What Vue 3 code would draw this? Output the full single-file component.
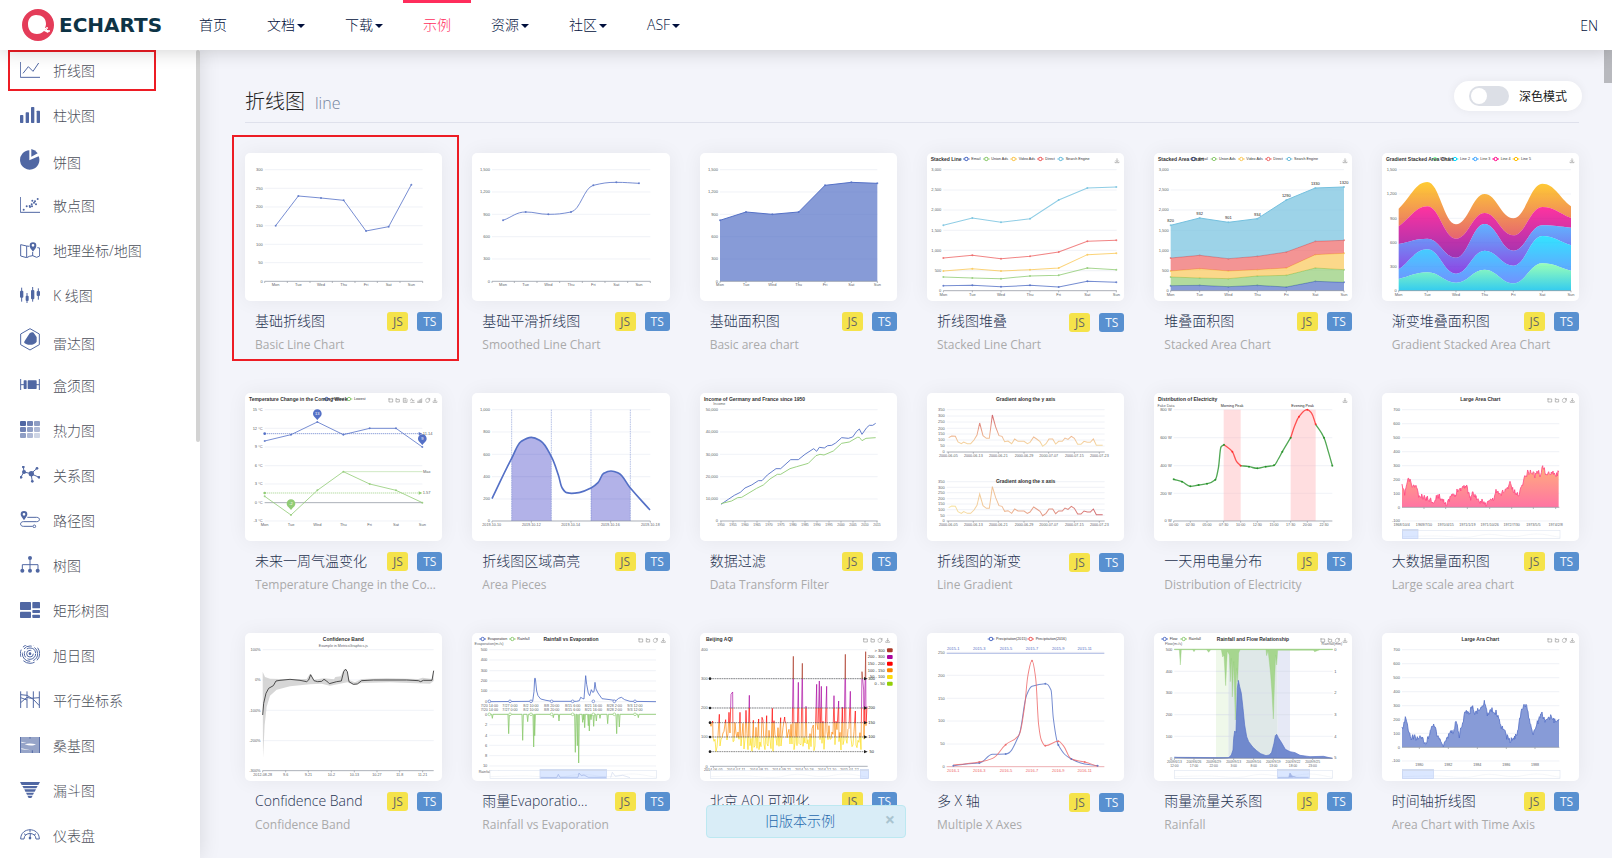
<script setup>
import { ref } from 'vue'

const dark = ref(false)
const noticeOpen = ref(true)

const nav = [
  { name: '首页' },
  { name: '文档', caret: true },
  { name: '下载', caret: true },
  { name: '示例', active: true },
  { name: '资源', caret: true },
  { name: '社区', caret: true },
  { name: 'ASF', caret: true }
]

/* ---------- SVG helpers ---------- */
const C = { blue: '#5470c6', green: '#91cc75', yellow: '#fac858', red: '#ee6666', cyan: '#73c0de' }
const el = (tag, attrs, text) => ({ tag, attrs, text })
const path = (d, attrs = {}) => el('path', { d, fill: 'none', ...attrs })
const rect = (x, y, width, height, attrs = {}) => el('rect', { x, y, width, height, ...attrs })
const text = (x, y, t, attrs = {}) =>
  el('text', { x, y, 'font-size': 12, fill: '#5c5f68', 'text-anchor': 'middle', ...attrs }, t)
const title = (x, y, t, anchor = 'start') =>
  text(x, y, t, { 'font-size': 15, 'font-weight': 700, fill: '#333', 'text-anchor': anchor })
const zip = (xs, ys) => xs.map((x, i) => [x, ys[i]])
const poly = pts => 'M' + pts.map(p => p.join(' ')).join('L')
const pairs = s => s.split(' ').map(p => p.split(',').map(Number))

function smooth(pts, start = 'M') {
  const n = pts.length
  const slope = pts.map((p, i) => {
    if (i === 0 || i === n - 1) {
      const a = pts[i ? n - 2 : 0]
      const b = pts[i ? n - 1 : 1]
      return (b[1] - a[1]) / (b[0] - a[0])
    }
    const l = (p[1] - pts[i - 1][1]) / (p[0] - pts[i - 1][0])
    const r = (pts[i + 1][1] - p[1]) / (pts[i + 1][0] - p[0])
    return l * r <= 0 ? 0 : (2 * l * r) / (l + r)
  })
  let d = start + pts[0].join(' ')
  for (let i = 1; i < n; i++) {
    const dx = (pts[i][0] - pts[i - 1][0]) / 2.4
    d += `C${pts[i - 1][0] + dx} ${pts[i - 1][1] + slope[i - 1] * dx} ${pts[i][0] - dx} ${pts[i][1] - slope[i] * dx} ${pts[i].join(' ')}`
  }
  return d
}
const dots = (pts, color) =>
  pts.map(([cx, cy]) => el('circle', { cx, cy, r: 3, fill: color, 'fill-opacity': 0.8 }))
const line = (pts, color, w = 3) => [path(poly(pts), { stroke: color, 'stroke-width': w, 'stroke-opacity': 0.8 }), ...dots(pts, color)]
const grid = (x1, x2, ys, labels, gap = 6) =>
  ys.flatMap((y, i) => [
    path(`M${x1} ${y}H${x2}`, { stroke: '#e9ebf3', 'stroke-width': 2 }),
    text(x1 - gap, y + 4, labels[i], { 'text-anchor': 'end' })
  ])
const axis = (x1, x2, y, ticks = []) => [
  path(`M${x1} ${y}H${x2}` + ticks.map(t => `M${t} ${y}v5`).join(''), { stroke: '#8e929c', 'stroke-width': 2 })
]
const xlabels = (xs, y, names, attrs) => names.map((n, i) => text(xs[i], y, n, attrs))
const days = ['Mon', 'Tue', 'Wed', 'Thu', 'Fri', 'Sat', 'Sun']
const legend = (items, y) =>
  items.flatMap(([x, name, color]) => [
    path(`M${x - 10} ${y}h20`, { stroke: color, 'stroke-width': 3 }),
    el('circle', { cx: x, cy: y, r: 5, fill: '#fff', stroke: color, 'stroke-width': 3 }),
    text(x + 15, y + 3, name, { 'text-anchor': 'start', fill: '#333', 'font-size': 11 })
  ])
const toolShapes = {
  zoom: 'M-5 -6V5H6V-4H-3M-7 -4H-2',
  undo: 'M-5 -6V5H5V-3H-3M-5 -6L-1 -3',
  file: 'M-5 -6H3L6 -3V6H-5ZM-2 -1H3M-2 2H3',
  wave: 'M-6 6H7M-6 1L-2 -5L1 2L6 0',
  bars: 'M-5 6V1M-1 6V-2M3 6V-4M6 6V-6M-7 6H7',
  ring: 'M-6 1C-6 -7 4 -8 6 -3M6 -1C6 7 -4 8 -6 3M6 -7V-2H2',
  save: 'M0 -7V3M-4 -1L0 3L4 -1M-6 3V6H6V3'
}
const tools = (y, items) =>
  items.map(([x, kind]) =>
    path(toolShapes[kind], { transform: `translate(${x} ${y})`, stroke: '#999', 'stroke-width': 2 })
  )
const slider = (x, y, w, from, to) => [
  rect(x, y + 3, w, 25, { fill: '#fff', stroke: '#e0e6f1', 'stroke-width': 2 }),
  path(smooth([[x, y + 22], [x + w * 0.2, y + 20], [x + w * 0.4, y + 24], [x + w * 0.55, y + 15], [x + w * 0.7, y + 22], [x + w * 0.85, y + 14], [x + w, y + 24]]), { stroke: '#e0e6f1', 'stroke-width': 1 }),
  rect(from, y, to - from, 28, { fill: '#87afff', 'fill-opacity': 0.3, stroke: '#c8d5f3', 'stroke-width': 2 }),
  rect(from, y, to - from, 5, { fill: '#d2dbee' })
]
const pin = (x, y, color, t) => [
  path(`M${x} ${y - 5}C${x - 3} ${y - 13} ${x - 13} ${y - 16} ${x - 13} ${y - 25}A13 13 0 1 1 ${x + 13} ${y - 25}C${x + 13} ${y - 16} ${x + 3} ${y - 13} ${x} ${y - 5}Z`, { fill: color }),
  text(x, y - 20, t, { fill: '#fff' })
]
function random(seed) {
  let s = seed
  return () => ((s = (s * 16807) % 2147483647) / 2147483647)
}
function jagged(pts, amp, seed, floor) {
  const r = random(seed)
  const out = []
  for (let i = 1; i < pts.length; i++) {
    const [a, b] = [pts[i - 1], pts[i]]
    for (let x = a[0]; x < b[0]; x += 2) {
      const y = a[1] + ((b[1] - a[1]) * (x - a[0])) / (b[0] - a[0]) + (r() - 0.5) * amp
      out.push([x, Math.min(floor, Math.round(y))])
    }
  }
  return out
}
const gradient = (id, stops, attrs = {}) => ({ id, stops, attrs: { x1: 0, y1: 0, x2: 0, y2: 1, ...attrs } })

/* ---------- chart thumbnails ---------- */
const area = (pts, base) => poly(pts) + `L${pts[pts.length - 1][0]} ${base}L${pts[0][0]} ${base}Z`
const thousands = ['1,500', '1,200', '900', '600', '300', '0']
const ys6 = [119, 186, 253, 320, 387, 454]
const ys7 = [119, 180, 240, 301, 361, 422, 482]
const lower6 = [74, 141, 208, 275, 342, 408]
const stackLabels = ['3,000', '2,500', '2,000', '1,500', '1,000', '500', '0']

function basicLine() {
  const xs = [137, 205, 273, 341, 408, 476, 544]
  return [
    ...grid(104, 578, [119, 175, 231, 287, 343, 398, 454], ['300', '250', '200', '150', '100', '50', '0']),
    ...axis(104, 578, 454, [104, 172, 240, 307, 375, 442, 510, 578]),
    ...xlabels(xs, 468, days),
    ...line(zip(xs, [287, 198, 204, 211, 303, 290, 164]), C.blue)
  ]
}
function smoothLine() {
  const xs = [819, 887, 955, 1023, 1090, 1159, 1227]
  const pts = zip(xs, [271, 246, 253, 246, 166, 157, 160])
  return [
    ...grid(786, 1261, ys6, thousands),
    ...axis(786, 1261, 454, [786, 853, 921, 989, 1057, 1125, 1193, 1261]),
    ...xlabels(xs, 468, days),
    path(smooth(pts), { stroke: C.blue, 'stroke-width': 3, 'stroke-opacity': 0.8 }),
    ...dots(pts, C.blue)
  ]
}
function basicArea() {
  const xs = [90, 168, 247, 326, 405, 484, 562]
  const pts = zip(xs, [271, 246, 253, 246, 166, 157, 160])
  return [
    ...grid(90, 562, ys6, thousands),
    path(area(pts, 454), { fill: C.blue, 'fill-opacity': 0.7 }),
    path(poly(pts), { stroke: C.blue, 'stroke-width': 3 }),
    ...dots(pts, C.blue),
    ...axis(90, 562, 454, xs),
    ...xlabels(xs, 468, days)
  ]
}
const stackRows = [
  [467, 466, 470, 466, 471, 454, 457],
  [441, 444, 446, 438, 436, 414, 419],
  [423, 416, 423, 419, 414, 374, 370],
  [384, 376, 386, 379, 366, 334, 331],
  [286, 264, 277, 266, 210, 174, 171]
]
const stackColors = [C.blue, C.green, C.yellow, C.red, C.cyan]
function stackedLine() {
  const xs = [760, 847, 933, 1020, 1106, 1192, 1279]
  return [
    ...legend([[829, 'Email', C.blue], [889, 'Union Ads', C.green], [971, 'Video Ads', C.yellow], [1051, 'Direct', C.red], [1112, 'Search Engine', C.cyan]], 87),
    title(722, 93, 'Stacked Line'),
    ...tools(92, [[1281, 'save']]),
    ...grid(760, 1280, ys7, stackLabels),
    ...axis(760, 1280, 482, xs),
    ...xlabels(xs, 497, days),
    ...stackRows.flatMap((r, i) => line(zip(xs, r), stackColors[i]))
  ]
}
function stackedArea() {
  const xs = [92, 179, 265, 352, 439, 526, 612]
  const tops = [820, 932, 901, 934, 1290, 1330, 1320]
  return [
    ...legend([[161, 'Email', C.blue], [222, 'Union Ads', C.green], [304, 'Video Ads', C.yellow], [385, 'Direct', C.red], [447, 'Search Engine', C.cyan]], 87),
    title(54, 93, 'Stacked Area Chart'),
    ...tools(92, [[615, 'save']]),
    ...grid(92, 612, ys7, stackLabels),
    ...stackRows.flatMap((r, i) => {
      const base = i ? stackRows[i - 1] : xs.map(() => 482)
      return [
        path(poly(zip(xs, r)) + poly(zip(xs, base).reverse()).replace('M', 'L') + 'Z', { fill: stackColors[i], 'fill-opacity': 0.7 }),
        path(poly(zip(xs, r)), { stroke: stackColors[i], 'stroke-width': 3 }),
        ...dots(zip(xs, r), stackColors[i])
      ]
    }),
    ...axis(92, 612, 482, xs),
    ...xlabels(xs, 497, days),
    ...tops.map((t, i) => text(xs[i], stackRows[4][i] - 9, t, { fill: '#222' }))
  ]
}
function gradientArea() {
  const xs = [776, 862, 948, 1034, 1120, 1207, 1293]
  const rows = [
    [236, 156, 283, 192, 265, 161, 229],
    [289, 229, 326, 249, 316, 231, 264],
    [342, 326, 383, 282, 362, 286, 293],
    [418, 358, 431, 362, 407, 318, 346],
    [447, 427, 458, 419, 460, 400, 422],
    [482, 482, 482, 482, 482, 482, 482]
  ]
  return [
    ...legend([[885, 'Line 1', '#80ffa5'], [945, 'Line 2', '#00ddff'], [1006, 'Line 3', '#37a2ff'], [1067, 'Line 4', '#ff0087'], [1128, 'Line 5', '#ffbf00']], 87),
    title(738, 93, 'Gradient Stacked Area Chart'),
    ...tools(92, [[1296, 'save']]),
    ...grid(776, 1293, [119, 192, 265, 338, 410, 482], thousands),
    ...rows.slice(0, 5).map((r, i) =>
      path(smooth(zip(xs, r)) + smooth(zip(xs, rows[i + 1]).reverse(), 'L') + 'Z', { fill: `url(#stack-${i})`, 'fill-opacity': 0.8 })
    ),
    ...axis(776, 1293, 482, xs),
    ...xlabels(xs, 497, days)
  ]
}
function temperature() {
  const xs = [104, 183, 262, 340, 419, 498, 577]
  const dash = { 'stroke-width': 2, 'stroke-dasharray': '4 2' }
  return [
    ...legend([[290, 'Highest', C.blue], [357, 'Lowest', C.green]], 42),
    title(57, 48, 'Temperature Change in the Coming Week'),
    ...tools(46, [[482, 'zoom'], [503, 'undo'], [525, 'file'], [547, 'wave'], [569, 'bars'], [593, 'ring'], [615, 'save']]),
    ...grid(104, 577, [74, 130, 186, 242, 297, 353, 408], ['15 °C', '12 °C', '9 °C', '6 °C', '3 °C', '0 °C', '-3 °C']),
    ...axis(104, 577, 353),
    ...xlabels(xs, 424, days),
    path('M104 146H570', { stroke: C.blue, ...dash }),
    path('M104 324H570', { stroke: C.green, ...dash }),
    path('M340 260H577', { stroke: C.green, ...dash }),
    path('M566 141L577 146L566 151Z', { fill: C.blue }),
    path('M566 319L577 324L566 329Z', { fill: C.green }),
    el('circle', { cx: 104, cy: 146, r: 4, fill: C.blue }),
    el('circle', { cx: 104, cy: 324, r: 4, fill: C.green }),
    ...line(zip(xs, [168, 149, 111, 149, 130, 130, 186]), C.blue),
    ...line(zip(xs, [334, 390, 316, 260, 297, 316, 353]), C.green),
    ...pin(262, 111, C.blue, '13'),
    ...pin(577, 186, C.blue, '9'),
    ...pin(183, 381, C.green, '-2'),
    text(593, 150, '11.14'), text(590, 264, 'Max'), text(590, 328, '1.57')
  ]
}
function areaPieces() {
  const pts = pairs('786,341 845,220 873,170 904,157 932,168 964,215 985,270 996,308 1010,323 1025,325 1050,322 1083,309 1104,293 1121,265 1143,258 1165,264 1201,309 1260,375')
  const dash = x => path(`M${x} 74V408`, { stroke: C.blue, 'stroke-opacity': 0.6, 'stroke-width': 2, 'stroke-dasharray': '5 2' })
  const piece = (a, b) => {
    const p = pts.slice(a, b)
    return path(smooth(p) + `V408H${p[0][0]}Z`, { fill: '#0000b4', 'fill-opacity': 0.3 })
  }
  return [
    ...grid(786, 1261, lower6, ['1,000', '800', '600', '400', '200', '0']),
    piece(1, 6), piece(11, 17),
    ...[845, 964, 1083, 1201].map(dash),
    path(smooth(pts), { stroke: C.blue, 'stroke-width': 5 }),
    ...axis(786, 1261, 408, [786, 904, 1023, 1142, 1261]),
    ...xlabels([785, 904, 1022, 1141, 1261], 423, ['2019-10-10', '2019-10-12', '2019-10-14', '2019-10-16', '2019-10-18'], { 'font-size': 11 })
  ]
}
function income() {
  const xs = Array.from({ length: 14 }, (_, i) => 93 + i * 36)
  return [
    title(42, 48, 'Income of Germany and France since 1950'),
    text(88, 60, 'Income', { 'font-size': 11 }),
    ...grid(90, 563, lower6, ['50,000', '40,000', '30,000', '20,000', '10,000', '0']),
    ...axis(90, 563, 408, xs),
    ...xlabels(xs, 423, xs.map((_, i) => 1950 + i * 5), { 'font-size': 10 }),
    path(poly(pairs('93,358 115,343 133,331 151,322 165,309 185,300 205,287 216,287 232,270 258,251 272,251 302,224 325,224 345,208 371,191 380,199 388,187 403,189 413,182 425,181 437,174 455,158 475,160 488,156 500,139 508,132 516,148 530,128 538,121 548,121 557,115')), { stroke: C.blue, 'stroke-width': 3, 'stroke-opacity': 0.9 }),
    path(poly(pairs('93,356 125,348 143,338 155,337 180,322 200,310 220,300 240,282 262,268 272,268 300,251 320,245 355,235 378,212 390,208 402,210 430,198 455,175 478,171 502,157 508,157 516,167 528,160 557,158')), { stroke: C.green, 'stroke-width': 3, 'stroke-opacity': 0.9 })
  ]
}
function lineGradient() {
  const pts = pairs('776,158 785,153 796,154 804,171 814,176 821,171 832,176 842,176 852,165 861,150 869,114 879,152 889,160 898,160 907,90 917,126 927,152 936,154 944,170 954,168 965,176 974,162 984,169 1002,169 1012,176 1020,172 1031,156 1040,162 1050,170 1058,184 1068,176 1077,162 1088,162 1097,177 1106,169 1117,169 1125,159 1134,163 1144,154 1153,160 1163,178 1173,178 1182,169 1192,172 1201,172 1210,162 1219,181 1238,181')
  const labels = ['350', '300', '250', '200', '150', '100', '50', '0']
  const dates = ['2000-06-05', '2000-06-13', '2000-06-21', '2000-06-29', '2000-07-07', '2000-07-15', '2000-07-23']
  const xs = [775, 850, 925, 1002, 1076, 1153, 1228]
  return [
    title(1007, 48, 'Gradient along the y axis', 'middle'),
    ...grid(770, 1244, [74, 93, 111, 130, 147, 165, 183, 201], labels),
    ...axis(770, 1244, 201, xs),
    ...xlabels(xs, 216, dates, { 'font-size': 11 }),
    path(poly(pts), { stroke: 'url(#heat-y)', 'stroke-width': 3, 'stroke-opacity': 0.8 }),
    ...grid(770, 1244, [290, 307, 323, 341, 357, 374, 391, 408], labels),
    title(1007, 293, 'Gradient along the x axis', 'middle'),
    ...axis(770, 1244, 408, xs),
    ...xlabels(xs, 423, dates, { 'font-size': 11 }),
    path(poly(pts.map(([x, y]) => [x, Math.round(408 - (201 - y) * 0.93)])), { stroke: 'url(#heat-x)', 'stroke-width': 3, 'stroke-opacity': 0.8 })
  ]
}
function electricity() {
  const seg = (s, stroke) => path(smooth(pairs(s)), { stroke, 'stroke-width': 4, 'stroke-opacity': 0.75 })
  const xs = [101, 151, 201, 251, 302, 352, 402, 452, 502, 552]
  return [
    title(54, 48, 'Distribution of Electricity'),
    ...tools(46, [[615, 'save']]),
    ...grid(101, 577, [74, 158, 242, 325, 408], ['800 W', '600 W', '400 W', '200 W', '0 W']),
    text(78, 66, 'Fake Data', { 'font-size': 11 }),
    rect(251, 74, 51, 334, { fill: '#ffadb1', 'fill-opacity': 0.4 }),
    rect(452, 74, 75, 334, { fill: '#ffadb1', 'fill-opacity': 0.4 }),
    text(276, 67, 'Morning Peak', { fill: '#222', 'font-size': 11 }),
    text(488, 67, 'Evening Peak', { fill: '#222', 'font-size': 11 }),
    seg('101,283 126,290 151,304 176,300 201,296 226,284 235,250 243,186 252,179', '#188b1c'),
    seg('302,242 327,245 352,250 377,245 402,241 415,222 427,200 452,158', '#188b1c'),
    seg('527,118 552,158 565,200 577,242', '#188b1c'),
    seg('252,179 277,200 290,230 302,242', '#f22'),
    seg('452,158 465,120 477,95 502,74 515,85 527,118', '#f22'),
    ...dots(pairs('101,283 126,290 151,304 176,300 201,296 226,284 252,179 327,245 352,250 377,245 402,241 427,200 452,158 552,158 577,242'), '#188b1c'),
    ...dots(pairs('277,200 302,242 477,95 502,74 527,118'), '#f22'),
    ...axis(101, 577, 408, xs),
    ...xlabels(xs, 423, ['00:00', '02:30', '05:00', '07:30', '10:00', '12:30', '15:00', '17:30', '20:00', '22:30'], { 'font-size': 11 })
  ]
}
const wideLabels = ['700', '600', '500', '400', '300', '200', '100', '0', '-100']
const wideYs = [74, 116, 158, 200, 242, 284, 325, 367, 408]
function largeArea(name, key, stroke, fill, amp, seed, xs, labels, to) {
  const pts = jagged(pairs(key), amp, seed, 366)
  return [
    title(1021, 48, name, 'middle'),
    ...tools(46, [[1229, 'zoom'], [1251, 'undo'], [1273, 'ring'], [1297, 'save']]),
    ...grid(786, 1258, wideYs, wideLabels),
    path(area(pts, 367), { fill }),
    path(poly(pts), { stroke, 'stroke-width': 3, 'stroke-opacity': 0.8 }),
    ...axis(786, 1258, 367, xs.filter(x => x > 790)),
    ...xlabels(xs, 423, labels, { 'font-size': 11 }),
    ...slider(787, 433, 473, 787, to)
  ]
}
function confidence() {
  const xs = [98, 167, 235, 304, 373, 441, 509, 578]
  return [
    title(340, 48, 'Confidence Band', 'middle'),
    text(340, 67, 'Example in MetricsGraphics.js', { 'font-size': 11 }),
    ...grid(98, 611, [74, 165, 256, 347, 437], ['100%', '0%', '-100%', '-200%', '-300%']),
    path('M98 140L105 156L120 161L180 163L230 162L240 146L252 164L282 160L312 163L316 156L332 154L342 132L349 132L358 166L375 172L395 162L470 160L565 162L578 158L606 162L611 137V168L600 176L480 172L395 174L372 180L352 172L330 176L300 182L275 176L240 178L180 184L140 194L120 212L110 245L104 300L99 400Z', { fill: '#ccc', 'fill-opacity': 0.8 }),
    path(poly(pairs('98,270 101,235 108,205 116,190 130,182 138,168 150,166 180,163 210,166 230,170 236,165 242,149 252,167 263,170 275,169 282,163 290,168 298,176 320,170 334,168 341,140 347,133 352,140 357,170 370,178 382,177 395,167 430,165 530,165 565,167 572,170 580,166 606,166 611,137')), { stroke: '#333', 'stroke-width': 3, 'stroke-opacity': 0.85 }),
    ...axis(98, 611, 437, xs),
    ...xlabels(xs, 453, ['2012-08-28', '9-6', '9-21', '10-2', '10-13', '10-27', '11-8', '11-21'], { 'font-size': 11 })
  ]
}
function evaporation() {
  const xs = [778, 840, 903, 965, 1028, 1090, 1153, 1215]
  const dates = ['7/20 14:00', '7/27 0:00', '8/2 10:00', '8/8 20:00', '8/15 6:00', '8/21 16:00', '8/28 2:00', '9/3 12:00']
  const drops = [[787, 280], [836, 326], [878, 346], [893, 290], [911, 366], [914, 332], [970, 278], [987, 288], [1036, 382], [1042, 362], [1046, 414], [1058, 292], [1061, 284], [1064, 308], [1075, 302], [1078, 318], [1083, 284], [1091, 304], [1099, 288], [1110, 280], [1133, 296], [1160, 326], [1168, 306], [1225, 278]]
  const rings = (y, color) => xs.map(cx => el('circle', { cx, cy: y, r: 4, fill: '#fff', stroke: color, 'stroke-width': 2 }))
  return [
    ...legend([[758, 'Evaporation', C.blue], [847, 'Rainfall', C.green]], 42),
    title(1023, 48, 'Rainfall vs Evaporation', 'middle'),
    ...tools(46, [[1232, 'zoom'], [1254, 'undo'], [1276, 'ring'], [1300, 'save']]),
    text(777, 59, 'Evaporation(m³/s)', { 'font-size': 11 }),
    ...grid(778, 1278, [74, 105, 137, 168, 198, 230], ['500', '400', '300', '200', '100', '0']),
    ...grid(778, 1278, [268, 299, 331, 361, 392, 423], ['0', '2', '4', '6', '8', '10']),
    ...xlabels(xs, 245, dates, { 'font-size': 11 }), ...xlabels(xs, 258, dates, { 'font-size': 11 }),
    path(poly(pairs('778,230 908,229 912,200 914,160 916,160 920,198 924,212 932,222 948,226 965,229 1040,229 1048,227 1052,217 1057,220 1062,222 1067,152 1070,178 1075,205 1079,212 1084,194 1088,202 1092,200 1095,172 1098,192 1104,204 1116,221 1140,224 1158,227 1166,220 1174,217 1184,224 1200,229 1278,230')), { stroke: C.blue, 'stroke-width': 3, 'stroke-opacity': 0.85 }),
    path('M778 268' + drops.map(([x, y]) => `H${x - 2}L${x} ${y}L${x + 2} 268`).join('') + 'H1278', { stroke: C.green, 'stroke-width': 3, 'stroke-opacity': 0.9 }),
    ...rings(229, C.blue), ...rings(268, C.green),
    text(777, 444, 'Rainfall(mm)', { 'font-size': 11 }),
    ...slider(780, 433, 500, 930, 1130),
    path('M932 458H980L985 448L990 457H1044L1047 444L1054 452L1062 450L1075 457H1128', { stroke: '#9fb2e4', 'stroke-width': 2 }),
    path('M1142 458L1147 442L1156 454L1178 451L1200 458', { stroke: '#d2dbee', 'stroke-width': 2 })
  ]
}
function beijing() {
  const r = random(77)
  const peaks = [[68, 288], [88, 268], [107, 284], [117, 262], [123, 208], [128, 201], [150, 262], [168, 256], [178, 211], [190, 286], [206, 282], [216, 277], [230, 272], [247, 250], [272, 278], [284, 276], [310, 94], [325, 172], [337, 115], [348, 244], [370, 300], [380, 178], [388, 168], [394, 184], [410, 184], [432, 212], [446, 228], [457, 246], [466, 88], [481, 199], [496, 258], [516, 140], [521, 195], [527, 80], [531, 244]]
  const pts = []
  for (let x = 60; x <= 532; x += 3) {
    const peak = peaks.find(p => p[0] >= x && p[0] < x + 3)
    pts.push(peak || [x, Math.round(r() > 0.4 ? 338 + r() * 42 : 285 + r() * 60)])
  }
  const xs = [70, 138, 207, 275, 343, 411, 478]
  const bands = [['> 300', '#ac3b2a'], ['200 - 300', '#aa069f'], ['150 - 200', '#fd0100'], ['100 - 150', '#fb8200'], ['50 - 100', '#fbdb0f'], ['0 - 50', '#93ce07']]
  return [
    title(48, 48, 'Beijing AQI'),
    ...tools(46, [[526, 'zoom'], [548, 'undo'], [570, 'ring'], [593, 'save']]),
    ...grid(60, 533, [74, 161, 249, 336, 424], ['400', '300', '200', '100', '0'], 7),
    path(poly(pts), { stroke: 'url(#aqi)', 'stroke-width': 2 }),
    ...[[161, '300'], [249, '200'], [293, '150'], [336, '100'], [380, '50']].flatMap(([y, t]) => [
      path(`M60 ${y}H526`, { stroke: '#555', 'stroke-width': 2, 'stroke-dasharray': '5 2' }),
      el('circle', { cx: 60, cy: y, r: 4, fill: '#222' }),
      path(`M522 ${y - 5}L533 ${y}L522 ${y + 5}Z`, { fill: '#222' }),
      text(545, y + 4, t, { fill: '#222' })
    ]),
    ...bands.flatMap(([t, fill], i) => [
      rect(591, 70 + i * 20, 17, 12, { rx: 3, fill }),
      text(584, 80 + i * 20, t, { 'text-anchor': 'end', fill: '#333' })
    ]),
    ...axis(60, 533, 424, xs),
    ...xlabels(xs, 437, ['2014-06-05', '2014-07-11', '2014-08-15', '2014-09-21', '2014-10-26', '2014-12-10', '2015-01-22'], { 'font-size': 11 }),
    ...slider(62, 433, 474, 511, 536)
  ]
}
function multipleX() {
  const xs = [790, 868, 948, 1026, 1105, 1184]
  const a = pairs('790,422 829,417 868,414 908,388 947,387 987,330 1010,210 1026,184 1066,176 1083,195 1090,280 1105,360 1144,402 1184,417 1223,422')
  const b = pairs('790,420 829,416 868,411 908,400 947,359 987,330 1003,250 1014,150 1026,107 1037,160 1046,300 1054,345 1066,362 1105,349 1120,362 1144,402 1184,411 1223,424')
  return [
    ...legend([[903, 'Precipitation(2015)', C.blue], [1022, 'Precipitation(2016)', C.red]], 42),
    ...grid(770, 1243, [82, 151, 220, 288, 357, 425], ['250', '200', '150', '100', '50', '0']),
    path('M770 85H1243', { stroke: C.blue, 'stroke-width': 2, 'stroke-opacity': 0.7 }),
    path('M770 425H1243', { stroke: C.red, 'stroke-width': 2, 'stroke-opacity': 0.7 }),
    ...xlabels(xs, 75, ['2015-1', '2015-3', '2015-5', '2015-7', '2015-9', '2015-11'], { fill: C.blue }),
    ...xlabels(xs, 440, ['2016-1', '2016-3', '2016-5', '2016-7', '2016-9', '2016-11'], { fill: C.red }),
    path(smooth(a), { stroke: C.blue, 'stroke-width': 3, 'stroke-opacity': 0.8 }),
    path(smooth(b), { stroke: C.red, 'stroke-width': 3, 'stroke-opacity': 0.8 }),
    ...dots([a[0], a[2], a[4], a[8], a[11], a[12], a[14]], C.blue),
    ...dots([b[2], b[4], b[8], b[12], b[13], b[16]], C.red)
  ]
}
function rainfall() {
  const xs = [103, 162, 221, 281, 341, 400, 459, 518]
  return [
    ...legend([[74, 'Flow', C.blue], [131, 'Rainfall', C.green]], 42),
    title(339, 48, 'Rainfall and Flow Relationship', 'middle'),
    ...tools(46, [[548, 'zoom'], [570, 'undo'], [592, 'ring'], [615, 'save']]),
    text(101, 59, 'Flow(m³/s)', { 'font-size': 11 }), text(576, 59, 'Rainfall(mm)', { 'font-size': 11 }),
    ...grid(103, 578, [74, 139, 204, 269, 334, 400], ['500', '400', '300', '200', '100', '0']),
    rect(228, 74, 37, 326, { fill: '#eff8ea' }),
    rect(265, 74, 148, 326, { fill: '#dfe8e8' }),
    rect(413, 74, 37, 326, { fill: '#e6e9f6' }),
    ...[139, 204, 269, 334].map(y => path(`M228 ${y}H450`, { stroke: '#d8dde8', 'stroke-width': 2 })),
    path('M103 74H118L121 120L124 74H158L162 80L166 74H200L206 82L212 74H244L248 96L252 90L257 182L262 78L268 90L271 170L274 100L277 216L281 110L286 285L290 130L293 170L296 84L300 74H378L380 92L384 76L388 110L392 150L396 205L400 282L404 160L407 90L410 120L413 76H462H520L524 80L540 74H578V72H103Z', { fill: '#a6d68f', stroke: C.green, 'stroke-width': 1 }),
    path('M103 397L140 399L235 400L265 399L274 390L279 375L281 340L284 318L288 322L292 190L295 166L299 185L304 205L309 250L314 300L320 335L326 350L338 366L350 377L362 386L378 392L388 390L395 382L402 355L406 332L410 328L415 338L424 352L436 373L450 380L465 383L480 391L510 395L550 394L577 400Z', { fill: C.blue, 'fill-opacity': 0.8, stroke: C.blue, 'stroke-width': 2 }),
    ...axis(103, 578, 400, xs),
    ...[0, 1, 2, 3, 4, 5].map(i => text(586, 78 + i * 65, i)),
    ...xlabels(xs, 414, ['2009/6/13', '2009/6/26', '2009/6/29', '2009/9/13', '2009/9/16', '2009/9/19', '2009/9/22', '2009/9/25'], { 'font-size': 10 }),
    ...xlabels(xs, 425, ['12:00', '17:00', '22:00', '3:00', '8:00', '13:00', '18:00', '23:00'], { 'font-size': 10 }),
    ...slider(103, 433, 475, 412, 508),
    path('M414 458H446L450 444L456 453L470 457H506', { fill: C.blue, 'fill-opacity': 0.4, stroke: '#9fb2e4', 'stroke-width': 2 })
  ]
}
const largeKey = '786,305 794,325 804,283 812,290 818,308 828,300 838,340 845,335 860,340 885,350 892,330 903,340 912,345 920,362 928,345 935,330 945,335 955,308 962,312 978,300 985,320 992,340 997,325 1008,335 1018,358 1026,345 1032,350 1038,362 1048,345 1060,345 1068,318 1080,330 1090,318 1100,315 1110,290 1118,315 1132,330 1140,320 1152,280 1163,262 1180,262 1185,275 1192,258 1200,270 1209,244 1220,272 1237,258 1248,270 1258,262'
const timeKey = '786,315 796,282 803,300 812,345 820,335 838,342 845,335 855,358 863,340 875,310 883,300 890,325 900,345 910,362 920,340 930,320 942,320 948,290 958,330 975,265 990,260 998,242 1005,268 1015,255 1025,255 1034,228 1042,268 1052,250 1070,265 1085,305 1100,335 1110,350 1125,335 1133,320 1143,265 1152,242 1162,250 1170,300 1180,325 1190,300 1204,265 1215,290 1232,272 1245,290 1258,290'

const charts = [
  { zh: '基础折线图', en: 'Basic Line Chart', box: '45 69 592 444', shapes: basicLine(), marked: true },
  { zh: '基础平滑折线图', en: 'Smoothed Line Chart', box: '726 69 592 444', shapes: smoothLine() },
  { zh: '基础面积图', en: 'Basic area chart', box: '30 69 592 444', shapes: basicArea() },
  { zh: '折线图堆叠', en: 'Stacked Line Chart', box: '711 69 592 444', shapes: stackedLine() },
  { zh: '堆叠面积图', en: 'Stacked Area Chart', box: '42 69 592 444', shapes: stackedArea() },
  {
    zh: '渐变堆叠面积图', en: 'Gradient Stacked Area Chart', box: '726 69 592 444', shapes: gradientArea(),
    gradients: [['#ffbf00', '#e03e4c'], ['#ff0087', '#87009d'], ['#37a2ff', '#7415db'], ['#00ddff', '#4d77ff'], ['#80ffa5', '#01bfec']]
      .map(([a, b], i) => gradient(`stack-${i}`, [[0, a], [1, b]]))
  },
  { zh: '未来一周气温变化', en: 'Temperature Change in the Coming Week', box: '45 24 592 444', shapes: temperature() },
  { zh: '折线图区域高亮', en: 'Area Pieces', box: '726 24 592 444', shapes: areaPieces() },
  { zh: '数据过滤', en: 'Data Transform Filter', box: '30 24 592 444', shapes: income() },
  {
    zh: '折线图的渐变', en: 'Line Gradient', box: '711 24 592 444', shapes: lineGradient(),
    gradients: [
      gradient('heat-y', [[0, '#c8454c'], [0.5, '#e2876a'], [0.8, '#efb97e'], [1, '#f3d48e']]),
      gradient('heat-x', [[0, '#f6e08e'], [0.4, '#e9a277'], [1, '#c8454c']], { x2: 1, y2: 0 })
    ]
  },
  { zh: '一天用电量分布', en: 'Distribution of Electricity', box: '42 24 592 444', shapes: electricity() },
  {
    zh: '大数据量面积图', en: 'Large scale area chart', box: '726 24 592 444',
    shapes: largeArea('Large Area Chart', largeKey, '#ff4683', 'url(#sunset)', 16, 11, [785, 852, 917, 982, 1049, 1115, 1180, 1247],
      ['1968/10/4', '1969/7/10', '1970/4/15', '1971/1/19', '1971/10/26', '1972/7/30', '1973/5/5', '1974/2/8'], 834),
    gradients: [gradient('sunset', [[0, '#ffae7c'], [1, '#ff74a3']])]
  },
  { zh: 'Confidence Band', en: 'Confidence Band', box: '45 24 592 444', shapes: confidence() },
  { zh: '雨量Evaporation关系图', en: 'Rainfall vs Evaporation', box: '726 24 592 444', shapes: evaporation() },
  {
    zh: '北京 AQI 可视化', en: 'Beijing AQI', box: '30 24 592 444', shapes: beijing(),
    gradients: [gradient('aqi', [[0, '#ac3b2a'], [0.249, '#ac3b2a'], [0.249, '#aa069f'], [0.5, '#aa069f'], [0.5, '#fd0100'], [0.626, '#fd0100'], [0.626, '#fb8200'], [0.749, '#fb8200'], [0.749, '#fbdb0f'], [1, '#fbdb0f']],
      { gradientUnits: 'userSpaceOnUse', y1: 74, y2: 424 })]
  },
  { zh: '多 X 轴', en: 'Multiple X Axes', box: '711 24 592 444', shapes: multipleX() },
  { zh: '雨量流量关系图', en: 'Rainfall', box: '42 24 592 444', shapes: rainfall() },
  {
    zh: '时间轴折线图', en: 'Area Chart with Time Axis', box: '726 24 592 444',
    shapes: largeArea('Large Ara Chart', timeKey, C.blue, '#879bd7', 18, 5, [838, 925, 1012, 1099, 1185], ['1980', '1982', '1984', '1986', '1988'], 881)
  }
]

/* ---------- sidebar ---------- */
const S = { stroke: 'currentColor', 'stroke-width': 3 }
const F = { fill: 'currentColor' }
const dot = (cx, cy, r) => el('circle', { cx, cy, r, ...F })
const kinds = [
  { name: '折线图', h: 48, marked: true, shapes: [path('M1 0V46H60', S), path('M9 34L25 14L39 28L56 3', S)] },
  { name: '柱状图', h: 48, shapes: [rect(0, 24, 10, 24, { rx: 2, ...F }), rect(17, 16, 10, 32, { rx: 2, ...F }), rect(33, 0, 10, 48, { rx: 2, ...F }), rect(50, 11, 10, 37, { rx: 2, ...F })] },
  { name: '饼图', h: 62, drop: 'low', shapes: [path('M28 4V34L56 22A29 29 0 1 1 28 4Z', F), path('M34 0A29 29 0 0 1 53 13L34 23Z', F)] },
  { name: '散点图', h: 48, shapes: [path('M1 0V46H60', S), ...[[11, 38], [20, 28], [30, 30], [35, 22], [29, 27], [37, 11], [42, 17], [48, 22], [45, 13], [53, 6], [36, 28]].map(([x, y]) => dot(x, y, 3))] },
  { name: '地理坐标/地图', h: 48, shapes: [path('M28 13L20 12L2 8V42L20 47L28 43M20 12V47M28 43L38 41L50 46L59 42V18L52 17M38 30V42', S), path('M39 29C34 22 29 17 29 11A10 10 0 0 1 49 11C49 17 44 22 39 29ZM39 6A4 4 0 1 0 39 14A4 4 0 1 0 39 6Z', { ...F, 'fill-rule': 'evenodd' })] },
  { name: 'K 线图', h: 48, shapes: [path('M5 2V44M21 18V48M38 0V44M55 4V38', S), rect(0, 11, 10, 21, { rx: 3, ...F }), rect(17, 26, 9, 16, { rx: 3, ...F }), rect(33, 9, 10, 28, { rx: 3, ...F }), rect(50, 12, 10, 15, { rx: 3, ...F })] },
  { name: '雷达图', h: 68, drop: 'lower', shapes: [path('M30 2L58 18V50L30 66L2 50V18Z', S), path('M29 16C36 11 40 13 43 17L50 27V41C46 49 32 53 20 49C12 46 11 43 14 39Z', F)] },
  { name: '盒须图', h: 34, shapes: [path('M2 0V34M2 17H12M58 0V34M48 17H58', S), rect(11, 4, 9, 26, { rx: 2, ...F }), rect(23, 4, 27, 26, { rx: 2, ...F })] },
  { name: '热力图', h: 51, shapes: [0, 1, 2].flatMap(r => [0, 1, 2].map(c => rect(c * 21, r * 18, 18, 15, { rx: 3, ...F, 'fill-opacity': 1 - (r + c) * 0.18 }))) },
  { name: '关系图', h: 50, shapes: [path('M10 2L12 18L2 34M12 18L33 23L51 7M33 23L57 34M33 23L37 46', S), dot(10, 3, 4), dot(12, 18, 6), dot(3, 34, 4), dot(34, 23, 8), dot(51, 7, 4), dot(57, 34, 4), dot(37, 46, 4)] },
  { name: '路径图', h: 52, shapes: [path('M22 19H50C61 19 61 32 50 32H10C-1 32 -1 46 10 46H38', S), el('circle', { cx: 43, cy: 46, r: 4, fill: 'none', ...S }), path('M12 28C6 19 2 15 2 10A10 10 0 0 1 22 10C22 15 18 19 12 28ZM12 6A4 4 0 1 0 12 14A4 4 0 1 0 12 6Z', { ...F, 'fill-rule': 'evenodd' })] },
  { name: '树图', h: 50, shapes: [path('M30 6V44M7 44V26H54V44', S), dot(30, 6, 6), dot(7, 44, 6), dot(30, 44, 6), dot(53, 44, 6)] },
  { name: '矩形树图', h: 48, shapes: [rect(0, 0, 33, 24, { rx: 2, ...F }), rect(37, 0, 23, 19, { rx: 2, ...F }), rect(0, 29, 33, 19, { rx: 2, ...F }), rect(37, 24, 23, 9, { rx: 2, ...F }), rect(37, 38, 23, 10, { rx: 2, ...F })] },
  { name: '旭日图', h: 56, shapes: [dot(30, 26, 4), ...[[10, '50 12'], [17, '34 6 20 8'], [23, '26 9 40 12'], [29, '22 9 36 14']].map(([r, dash]) => el('circle', { cx: 30, cy: 26, r, fill: 'none', ...S, 'stroke-dasharray': dash }))] },
  { name: '平行坐标系', h: 52, shapes: [path('M2 1V51M21 1V51M40 1V51M58 1V51', S), path('M2 11L21 13L40 25L58 44M2 35L21 19L32 22L58 20M2 20L21 27', S)] },
  { name: '桑基图', h: 48, shapes: [rect(0, 0, 60, 48, { ...F, 'fill-opacity': 0.6 }), path('M14 22C24 19 34 19 48 22C40 27 28 27 14 22ZM4 34L32 40L4 37ZM4 14L20 18L4 17Z', { fill: '#fff' }), path('M1 0V48M59 0V48M30 0V5M37 40V48', S)] },
  { name: '漏斗图', h: 48, shapes: [path('M0 0H60L55 9H5ZM7 12H53L49 19H11ZM13 22H48L44 29H16ZM18 32H42L39 38H21ZM22 41H38L34 48H26Z', F)] },
  { name: '仪表盘', h: 32, shapes: [path('M2 30C2 -7 58 -7 58 30H48C48 8 12 8 12 30Z', S), path('M12 14L18 19M30 2V10M48 14L42 19M30 31L31 14', S), dot(30, 27, 4)] }
]
</script>

<template>
  <div class="page">
    <header class="topbar">
      <a class="logo" href="#home">
        <svg class="logo-mark" viewBox="0 0 32 32" aria-hidden="true">
          <path fill="#e43c59" fill-rule="evenodd" d="M16 0A16 16 0 1 0 16 32A16 16 0 1 0 16 0ZM14 6C20 6 24 9 24 15C24 17 23 18 23 20L27 22L26 24L22 22C20 24 18 25 15 25C9 25 6 21 6 15C6 10 9 6 14 6Z" />
          <path d="M23 19L26 22" stroke="#fff" stroke-width="1" />
          <circle cx="25" cy="19" r="1" fill="#fff" />
          <circle cx="27" cy="22" r="1" fill="#fff" />
        </svg>
        <span class="logo-text">ECHARTS</span>
      </a>
      <nav class="nav">
        <a v-for="n in nav" :key="n.name" href="#" :class="['nav-link', { active: n.active }]">
          {{ n.name }}<i v-if="n.caret" class="caret"></i>
        </a>
      </nav>
      <a class="lang" href="#en">EN</a>
    </header>

    <div class="body">
      <aside class="side">
        <a v-for="k in kinds" :key="k.name" :href="'#' + k.name" :class="['kind', k.drop, { marked: k.marked }]">
          <svg class="kind-icon" :viewBox="`0 0 60 ${k.h}`" aria-hidden="true">
            <component :is="s.tag" v-for="(s, i) in k.shapes" :key="i" v-bind="s.attrs" />
          </svg>
          <span class="kind-name">{{ k.name }}</span>
        </a>
        <div class="side-thumb"></div>
      </aside>

      <main class="main">
        <label class="mode">
          <input v-model="dark" class="switch" type="checkbox" />
          <span>深色模式</span>
        </label>
        <h3 class="heading">折线图<small>line</small></h3>
        <div class="cards">
          <article v-for="(c, n) in charts" :key="n" :class="['card', { marked: c.marked }]">
            <a class="thumb" href="#editor" :aria-label="c.zh">
              <svg :viewBox="c.box" preserveAspectRatio="none">
                <defs v-if="c.gradients">
                  <linearGradient v-for="g in c.gradients" :id="g.id" :key="g.id" v-bind="g.attrs">
                    <stop v-for="(st, i) in g.stops" :key="i" :offset="st[0]" :stop-color="st[1]" />
                  </linearGradient>
                </defs>
                <component :is="s.tag" v-for="(s, i) in c.shapes" :key="i" v-bind="s.attrs">{{ s.text }}</component>
              </svg>
            </a>
            <div class="info">
              <h4 class="name">{{ c.zh }}</h4>
              <a class="badge js" href="#js">JS</a>
              <a class="badge ts" href="#ts">TS</a>
            </div>
            <p class="sub">{{ c.en }}</p>
          </article>
        </div>
      </main>
      <div class="main-thumb"></div>
    </div>

    <div v-if="noticeOpen" class="notice">
      <a href="#old">旧版本示例</a>
      <button type="button" aria-label="关闭" @click="noticeOpen = false">×</button>
    </div>
  </div>
</template>

<style>
html,
body,
#app {
  height: 100%;
}
body {
  margin: 0;
  overflow: hidden;
}
</style>

<style scoped>
.page {
  height: 100%;
  display: flex;
  flex-direction: column;
  position: relative;
  overflow: hidden;
  font-family: "Open Sans", "Noto Sans CJK SC", sans-serif;
  font-size: 14px;
  font-weight: 300;
  background: #f3f4fa;
}
a {
  text-decoration: none;
  color: inherit;
}
.topbar {
  height: 50px;
  flex: none;
  display: flex;
  align-items: center;
  background: #fff;
  box-shadow: 0 0 20px rgba(0, 0, 0, 0.2);
  position: relative;
  z-index: 3;
  padding: 0 14px 0 22px;
}
.logo {
  display: flex;
  align-items: center;
  gap: 5px;
  width: 157px;
}
.logo-mark {
  width: 32px;
  height: 32px;
  flex: none;
}
.logo-text {
  font: 700 20px "DejaVu Sans", sans-serif;
  color: #0d3345;
}
.nav {
  display: flex;
  height: 100%;
  flex: 1;
}
.nav-link {
  display: flex;
  align-items: center;
  padding: 0 20px 2px;
  color: #000f3c;
}
.nav-link.active {
  color: #ff2d5c;
  border-top: 3px solid #ff2d5c;
  padding-bottom: 6px;
}
.caret {
  margin: 3px 0 0 2px;
  border: 4px solid transparent;
  border-top-color: currentColor;
  border-bottom: 0;
}
.lang {
  color: #000f3c;
}
.body {
  flex: 1;
  min-height: 0;
  display: flex;
  position: relative;
}
.side {
  width: 200px;
  flex: none;
  overflow: hidden;
  background: #fff;
  box-shadow: 0 0 20px rgba(0, 0, 0, 0.12);
  position: relative;
  z-index: 1;
}
.kind {
  height: 45px;
  box-sizing: border-box;
  padding: 0 0 4px 20px;
  display: flex;
  align-items: center;
  gap: 13px;
  color: #4c4f5a;
  position: relative;
}
.kind-icon {
  width: 20px;
  flex: none;
  color: #5067a3;
  padding-bottom: 2px;
}
.kind-name {
  line-height: 20px;
}
.low .kind-name {
  padding-top: 4px;
}
.lower .kind-name {
  padding-top: 6px;
}
.kind.marked::after {
  content: "";
  position: absolute;
  inset: 0 44px 4px 8px;
  border: 2px solid #ed1c24;
}
.side-thumb {
  position: absolute;
  top: 0;
  right: 0;
  width: 4px;
  height: 392px;
  border-radius: 2px;
  background: #d3d3d3;
}
.main {
  flex: 1;
  min-width: 0;
  overflow: hidden;
  padding: 31px 33px 0 45px;
  position: relative;
}
.main-thumb {
  position: absolute;
  top: 0;
  right: 0;
  width: 8px;
  height: 33px;
  background: #b8b9be;
}
.mode {
  position: absolute;
  top: 31px;
  right: 30px;
  height: 30px;
  display: flex;
  align-items: center;
  gap: 10px;
  padding: 0 15px;
  border-radius: 15px;
  background: #fff;
  font-size: 12px;
  font-weight: 400;
  color: #222;
  box-shadow: 0 0 10px rgba(0, 0, 0, 0.06);
}
.switch {
  appearance: none;
  margin: 0;
  width: 40px;
  height: 20px;
  border-radius: 10px;
  background: #dcdfe6;
  display: flex;
  align-items: center;
  padding: 0 2px;
}
.switch::before {
  content: "";
  width: 16px;
  height: 16px;
  border-radius: 8px;
  background: #fff;
}
.switch:checked {
  justify-content: flex-end;
  background: #409eff;
}
.heading {
  margin: 0 0 30px;
  height: 41px;
  line-height: 41px;
  border-bottom: 1px solid #dfe1ec;
  font-size: 20px;
  font-weight: 300;
  color: #222;
}
.heading small {
  margin-left: 10px;
  font-size: 16px;
  color: #74839d;
}
.cards {
  display: grid;
  grid-template-columns: repeat(6, minmax(0, 1fr));
  gap: 39px 30px;
}
.card {
  position: relative;
}
.card.marked::after {
  content: "";
  position: absolute;
  inset: -18px -17px -7px -13px;
  border: 2px solid #ed1c24;
}
.thumb {
  display: block;
  aspect-ratio: 4 / 3;
  overflow: hidden;
  border-radius: 5px;
  background: #fff;
  box-shadow: 0 0 20px rgba(0, 0, 0, 0.06);
}
.thumb svg {
  display: block;
  width: 100%;
  height: 100%;
  font-family: "Liberation Sans", sans-serif;
  font-weight: 400;
}
.info {
  display: flex;
  align-items: center;
  padding: 10px 0 0 10px;
  height: 20px;
}
.name {
  margin: 0 auto 0 0;
  max-width: 112px;
  font-size: 14px;
  font-weight: 300;
  line-height: 20px;
  color: #1f3350;
  white-space: nowrap;
  overflow: hidden;
  text-overflow: ellipsis;
}
.badge {
  flex: none;
  width: 21px;
  height: 19px;
  margin: 2px 0 0 9px;
  border-radius: 3px;
  font-size: 12px;
  font-weight: 400;
  line-height: 19px;
  text-align: center;
}
.js {
  background: #f5e34a;
  color: #666;
}
.ts {
  width: 25px;
  background: #5890d0;
  color: #f4f7fc;
}
.sub {
  margin: 5px 5px 0 10px;
  font-size: 12px;
  font-weight: 400;
  line-height: 18px;
  color: #aaa;
  white-space: nowrap;
  overflow: hidden;
  text-overflow: ellipsis;
}
.notice {
  position: absolute;
  left: 50%;
  bottom: 20px;
  margin-left: -100px;
  width: 200px;
  height: 33px;
  box-sizing: border-box;
  border: 1px solid #bce8f1;
  border-radius: 4px;
  background: #d9edf7;
  z-index: 4;
  display: flex;
  align-items: center;
  justify-content: center;
  color: #1f68ad;
}
.notice a {
  padding: 0 12px 4px 0;
}
.notice button {
  position: absolute;
  right: 10px;
  top: 0;
  padding: 0;
  border: 0;
  background: none;
  color: #a9c4d0;
  font: 700 18px/26px "Open Sans", sans-serif;
}
</style>
